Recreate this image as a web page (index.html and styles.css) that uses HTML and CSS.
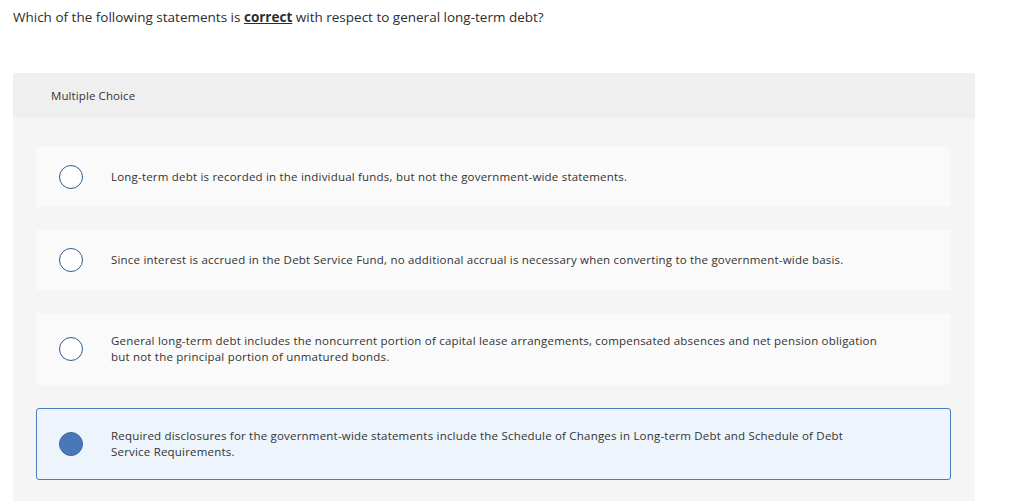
FILE: index.html
```html
<!DOCTYPE html>
<html>
<head>
<meta charset="utf-8">
<link rel="stylesheet" href="styles.css">
</head>
<body>
<p class="question">Which of the following statements is <strong class="key">correct</strong> with respect to general long-term debt?</p>
<section class="panel">
  <header class="panel-head">Multiple Choice</header>
  <div class="options">
    <div class="option">
      <span class="radio"></span>
      <span class="label">Long-term debt is recorded in the individual funds, but not the government-wide statements.</span>
    </div>
    <div class="option">
      <span class="radio"></span>
      <span class="label">Since interest is accrued in the Debt Service Fund, no additional accrual is necessary when converting to the government-wide basis.</span>
    </div>
    <div class="option">
      <span class="radio"></span>
      <span class="label">General long-term debt includes the noncurrent portion of capital lease arrangements, compensated absences and net pension obligation<br>but not the principal portion of unmatured bonds.</span>
    </div>
    <div class="option selected">
      <span class="radio"></span>
      <span class="label">Required disclosures for the government-wide statements include the Schedule of Changes in Long-term Debt and Schedule of Debt<br>Service Requirements.</span>
    </div>
  </div>
</section>
</body>
</html>
```
FILE: styles.css
```css
html, body {
  margin: 0;
  padding: 0;
  background: #ffffff;
}
body {
  font-family: "Open Sans", "Noto Sans", sans-serif;
  color: #333333;
  width: 1024px;
  height: 501px;
  overflow: hidden;
}
.question {
  margin: 0;
  padding: 8px 0 0 13px;
  font-size: 13.5px;
  line-height: 18px;
  color: #2d2d2d;
}
.key {
  font-weight: 700;
  text-decoration: underline;
}
.panel {
  margin: 47px 0 0 13px;
  width: 962px;
  background: #f5f5f5;
  border-radius: 3px 3px 0 0;
  height: 440px;
}
.panel-head {
  height: 45px;
  background: #efefef;
  display: flex;
  align-items: center;
  padding-left: 38px;
  font-size: 11.5px;
  letter-spacing: 0.1px;
  color: #333;
  border-radius: 3px 3px 0 0;
}
.options {
  padding: 29px 24px 0 23px;
  display: flex;
  flex-direction: column;
  gap: 23px;
}
.option {
  background: #fafafa;
  border-radius: 3px;
  display: flex;
  align-items: center;
  padding: 17px 22px;
  border: 1px solid transparent;
}
.option.selected {
  background: #edf4fc;
  border-color: #4a7bc0;
}
.radio {
  flex: none;
  box-sizing: border-box;
  width: 24px;
  height: 24px;
  border: 1px solid #2f5b8f;
  border-radius: 50%;
  background: #ffffff;
  margin-right: 28px;
}
.selected .radio {
  background: #4a78b6;
  border-color: #3c67a0;
}
.label {
  font-size: 11.5px;
  letter-spacing: 0.2px;
  line-height: 16px;
  padding: 2px 0;
}
```
